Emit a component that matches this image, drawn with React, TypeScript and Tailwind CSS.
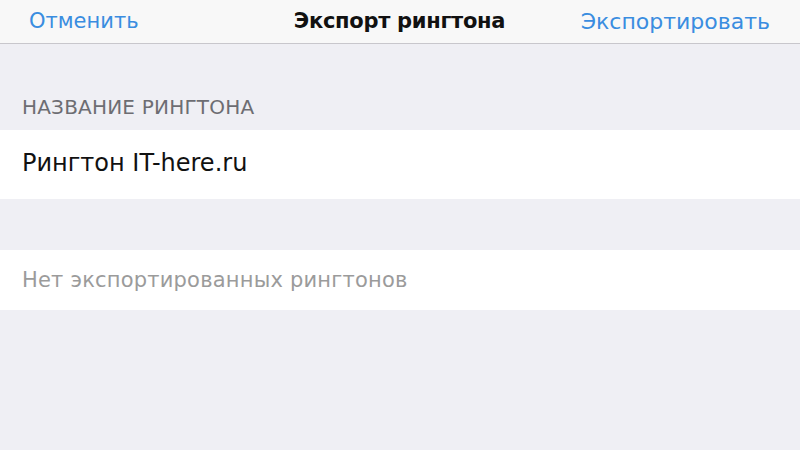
export default function App() {
  return (
    <div
      className="w-[800px] h-[450px] bg-[#efeff4] overflow-hidden"
      style={{ fontFamily: '"DejaVu Sans", "Noto Sans", sans-serif' }}
    >
      <div className="h-[44px] bg-[#f8f8f8] border-b border-[#c8c7cc] grid grid-cols-[1fr_auto_1fr] items-center pl-[29px] pr-[30px]">
        <span className="text-[21px] text-[#3a8de0] justify-self-start">Отменить</span>
        <span className="text-[21px] font-bold text-[#111] tracking-[-0.3px]">Экспорт рингтона</span>
        <span className="text-[22px] text-[#3a8de0] justify-self-end">Экспортировать</span>
      </div>
      <div className="h-[86px] flex items-end pl-[22px] pb-[8px]">
        <span className="text-[20px] text-[#6d6d72] tracking-[0.2px]">НАЗВАНИЕ РИНГТОНА</span>
      </div>
      <div className="h-[69px] bg-white flex items-center pl-[22px] pb-[4px]">
        <span className="text-[24px] text-[#111]">Рингтон IT-here.ru</span>
      </div>
      <div className="h-[51px]" />
      <div className="h-[60px] bg-white flex items-center pl-[22px] pt-[2px]">
        <span className="text-[21px] text-[#9b9b9b] tracking-[0.2px]">Нет экспортированных рингтонов</span>
      </div>
    </div>
  );
}
